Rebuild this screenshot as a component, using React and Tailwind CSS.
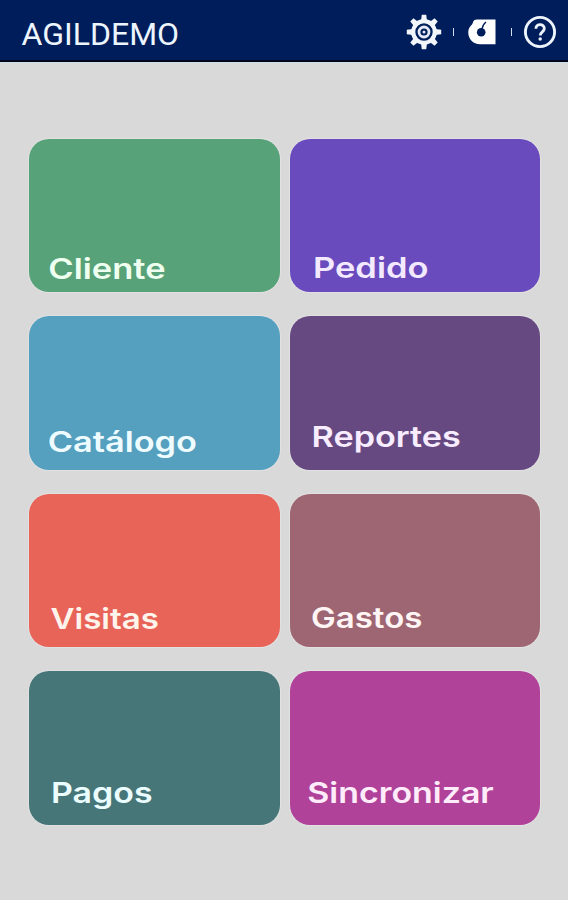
import React from 'react'

const tiles = [
  { label: 'Cliente', color: 'bg-[#57a278]', text: 'pl-[16px] pb-[5px] text-[#effff0] scale-x-[1.21]' },
  { label: 'Pedido', color: 'bg-[#694bbd]', text: 'pl-[19px] pb-[6px] text-[#f3eaff] scale-x-[1.21]' },
  { label: 'Catálogo', color: 'bg-[#559fbf]', text: 'pl-[15.5px] pb-[10px] text-[#effcff] scale-x-[1.205]' },
  { label: 'Reportes', color: 'bg-[#674982]', text: 'pl-[18px] pb-[15px] text-[#f7edff] scale-x-[1.2]' },
  { label: 'Visitas', color: 'bg-[#e86358]', text: 'pl-[18.5px] pb-[10px] text-[#fff4ec] scale-x-[1.16]' },
  { label: 'Gastos', color: 'bg-[#9e6672]', text: 'pl-[18px] pb-[11px] text-[#fff5f5] scale-x-[1.16]' },
  { label: 'Pagos', color: 'bg-[#477679]', text: 'pl-[18.5px] pb-[14px] text-[#ecfdff] scale-x-[1.19]' },
  { label: 'Sincronizar', color: 'bg-[#b04299]', text: 'pl-[14.5px] pb-[14px] text-[#ffecfb] scale-x-[1.19]' },
]

const teeth = [0, 45, 90, 135, 180, 225, 270, 315]

function GearIcon() {
  return (
    <svg viewBox="0 0 36 36" className="h-9 w-9" fill="none">
      {teeth.map((angle) => (
        <path key={angle} d="M15 7 L15.8 0.8 H20.2 L21 7 Z" fill="#f2f6fb" transform={`rotate(${angle} 18 18)`} />
      ))}
      <circle cx="18" cy="18" r="10.8" stroke="#f2f6fb" strokeWidth="4.2" />
      <circle cx="18" cy="18" r="5" stroke="#e3eaf5" strokeWidth="2.8" />
      <circle cx="18" cy="18" r="1.5" fill="#e3eaf5" />
    </svg>
  )
}

function TagIcon() {
  return (
    <svg viewBox="0 0 28 26" className="h-[26px] w-7" fill="none">
      <path d="M9 0.5 H27.5 V25.3 H12 C5 25.3 0.3 19.5 0.3 14 C0.3 9.5 2 7.5 4 5.5 C5.5 3.8 4.5 0.5 9 0.5 Z" fill="#fff" />
      <circle cx="13.2" cy="13.3" r="4.3" fill="#001d5b" />
      <path d="M14 10 C14.5 6.5 15.5 5 18 3" stroke="#001d5b" strokeWidth="1.3" />
    </svg>
  )
}

function HelpIcon() {
  return (
    <svg viewBox="0 0 34 34" className="h-[34px] w-[34px]" fill="none" stroke="#edf3fb">
      <circle cx="17" cy="17" r="14.6" strokeWidth="2.9" />
      <path d="M12.9 13.8 C12.9 8.2 21.3 8.3 21.3 13.5 C21.3 16.8 17.3 16.9 17.3 20.4" strokeWidth="2.8" />
      <circle cx="17.2" cy="24" r="1.7" fill="#edf3fb" stroke="none" />
    </svg>
  )
}

export default function App() {
  return (
    <div className="flex h-[900px] w-[568px] flex-col overflow-hidden bg-[#d9d9d9]">
      <header className="flex h-[62px] shrink-0 items-center justify-between border-b-2 border-[#000617] bg-[#001d5b] pt-[4px] pr-[11px] pl-[21.5px] shadow-[0_1px_0_#d3dde9]">
        <h1 className="origin-left pt-[3px] font-['Roboto',sans-serif] text-[32px] leading-9 text-[#edf5ff]">AGILDEMO</h1>
        <div className="flex items-center">
          <GearIcon />
          <span className="mr-[14px] ml-[11px] h-2 w-px bg-[#d5deeb]" />
          <TagIcon />
          <span className="mr-[11px] ml-[15px] h-2 w-px bg-[#d5deeb]" />
          <HelpIcon />
        </div>
      </header>

      <main className="grid grid-cols-2 gap-x-[10px] gap-y-6 pt-[76.5px] pr-[28px] pl-[29px]">
        {tiles.map((tile) => (
          <button
            key={tile.label}
            className={`flex h-[153.5px] items-end rounded-[20px] text-left shadow-[0_0_1px_1px_rgba(255,255,255,0.25)] ${tile.color}`}
          >
            <span className={`origin-left font-['Inter',sans-serif] text-[28.5px] leading-9 font-semibold ${tile.text}`}>
              {tile.label}
            </span>
          </button>
        ))}
      </main>
    </div>
  )
}
